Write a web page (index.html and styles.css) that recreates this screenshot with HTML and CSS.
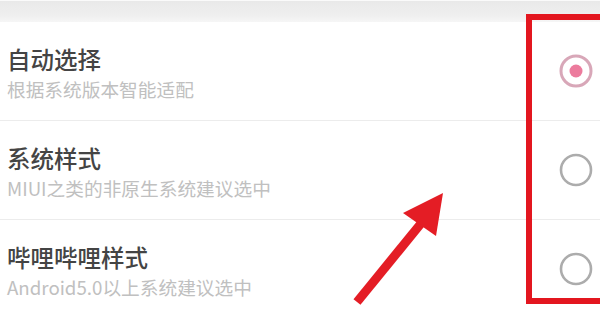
FILE: index.html
```html
<!DOCTYPE html>
<html lang="zh">
<head>
<meta charset="utf-8">
<link rel="stylesheet" href="styles.css">
</head>
<body>
<div class="page">
  <div class="topband"></div>
  <div class="list">
    <div class="row">
      <div class="texts">
        <div class="title">自动选择</div>
        <div class="sub">根据系统版本智能适配</div>
      </div>
      <svg class="radio" viewBox="0 0 34 34" width="34" height="34">
        <circle cx="17" cy="17" r="15" fill="#fff" stroke="#d8a7b8" stroke-width="3"/>
        <circle cx="17" cy="17" r="6.5" fill="#ec7b9d"/>
      </svg>
    </div>
    <div class="row">
      <div class="texts">
        <div class="title">系统样式</div>
        <div class="sub">MIUI之类的非原生系统建议选中</div>
      </div>
      <svg class="radio" viewBox="0 0 34 34" width="34" height="34">
        <circle cx="17" cy="17" r="15" fill="#fff" stroke="#acacac" stroke-width="2.6"/>
      </svg>
    </div>
    <div class="row">
      <div class="texts">
        <div class="title">哔哩哔哩样式</div>
        <div class="sub">Android5.0以上系统建议选中</div>
      </div>
      <svg class="radio" viewBox="0 0 34 34" width="34" height="34">
        <circle cx="17" cy="17" r="15" fill="#fff" stroke="#acacac" stroke-width="2.6"/>
      </svg>
    </div>
  </div>
  <div class="highlight"></div>
  <svg class="arrow" width="600" height="311" viewBox="0 0 600 311">
    <line x1="357" y1="302" x2="423" y2="221" stroke="#e41d25" stroke-width="9"/>
    <polygon points="443,193 403,213 436,236" fill="#e41d25"/>
  </svg>
</div>
</body>
</html>
```
FILE: styles.css
```css
html, body {
  margin: 0;
  padding: 0;
  background: #fff;
}
.page {
  position: relative;
  width: 600px;
  height: 311px;
  overflow: hidden;
  font-family: "Noto Sans CJK SC", "Noto Sans", sans-serif;
}
.topband {
  height: 21px;
  border-top: 1px solid #fafafa;
  background: linear-gradient(#e9e9e9, #efefef 70%, #f6f6f6);
}
.list {
  display: flex;
  flex-direction: column;
}
.row {
  height: 98px;
  border-bottom: 1px solid #ececec;
  display: flex;
  align-items: center;
  justify-content: space-between;
  padding: 0 7px 0 7px;
}
.texts {
  display: flex;
  flex-direction: column;
  gap: 5px;
  padding-top: 3px;
}
.title {
  font-size: 23.5px;
  line-height: 28px;
  font-weight: 500;
  color: #444;
}
.sub {
  font-size: 18.7px;
  line-height: 22px;
  color: #c0c0c0;
}
.radio {
  display: block;
  flex: none;
}
.highlight {
  position: absolute;
  left: 526px;
  top: 14px;
  width: 80px;
  height: 278px;
  border: 6px solid #e3161f;
}
.arrow {
  position: absolute;
  left: 0;
  top: 0;
}
```
